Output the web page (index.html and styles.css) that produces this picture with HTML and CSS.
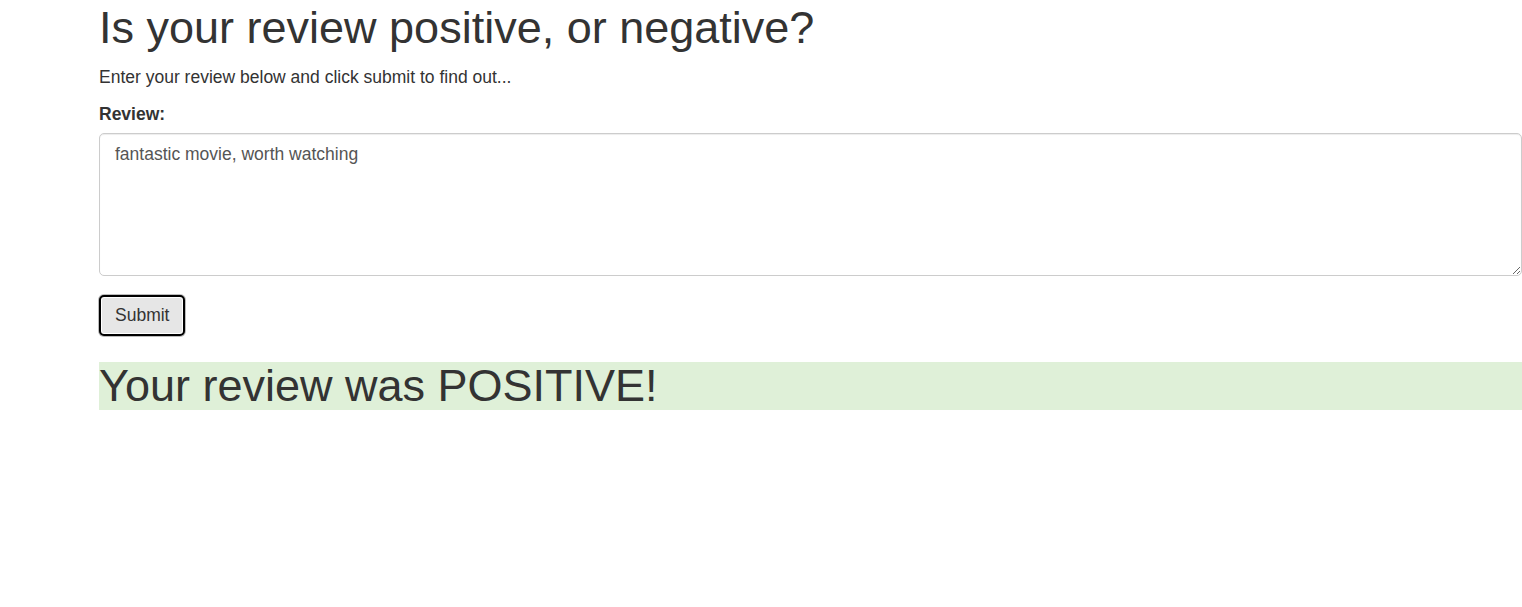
FILE: index.html
```html
<!DOCTYPE html>
<html lang="en">
<head>
<meta charset="utf-8">
<title>Review sentiment</title>
<link rel="stylesheet" href="styles.css">
</head>
<body>
<div class="container">
  <h1 class="title">Is your review positive, or negative?</h1>
  <p class="lead-text">Enter your review below and click submit to find out...</p>
  <form class="review-form">
    <div class="form-group">
      <label class="field-label" for="review">Review:</label>
      <textarea id="review" class="form-control" rows="5">fantastic movie, worth watching</textarea>
    </div>
    <button type="button" class="btn">Submit</button>
  </form>
  <h1 class="result">Your review was POSITIVE!</h1>
</div>
</body>
</html>
```
FILE: styles.css
```css
html, body {
  margin: 0;
  padding: 0;
  background: #fff;
  overflow: hidden;
}
body {
  font-family: "Liberation Sans", Arial, Helvetica, sans-serif;
  font-size: 17.5px;
  line-height: 25px;
  color: #333;
}
.container {
  margin-left: 99px;
  width: 1423px;
  padding-top: 3px;
}
.title {
  font-size: 45px;
  font-weight: 400;
  line-height: 49.5px;
  margin: 0 0 12.5px;
}
.lead-text {
  margin: 0 0 11.5px;
}
.field-label {
  display: block;
  font-weight: 700;
  margin-bottom: 6.25px;
}
.form-group {
  margin-bottom: 18.75px;
}
.form-control {
  display: block;
  box-sizing: border-box;
  width: 100%;
  height: 143px;
  margin: 0;
  padding: 8px 15px;
  font-family: inherit;
  font-size: 17.5px;
  line-height: 25px;
  color: #555;
  background: #fff;
  border: 1px solid #ccc;
  border-radius: 5px;
  box-shadow: inset 0 1px 1px rgba(0,0,0,.075);
  resize: vertical;
}
.btn {
  display: block;
  box-sizing: border-box;
  height: 41px;
  padding: 0 14px;
  font-family: inherit;
  font-size: 17.5px;
  line-height: 25px;
  color: #333;
  background: #e6e6e6;
  border: 2px solid #000;
  border-radius: 5px;
  box-shadow: inset 0 0 0 1px #fff, 0 0 0 1px #bbb;
  margin-left: 0;
}
.result {
  margin: 26px 0 0;
  font-size: 45px;
  font-weight: 400;
  line-height: 48px;
  background: #dff0d8;
}
```
